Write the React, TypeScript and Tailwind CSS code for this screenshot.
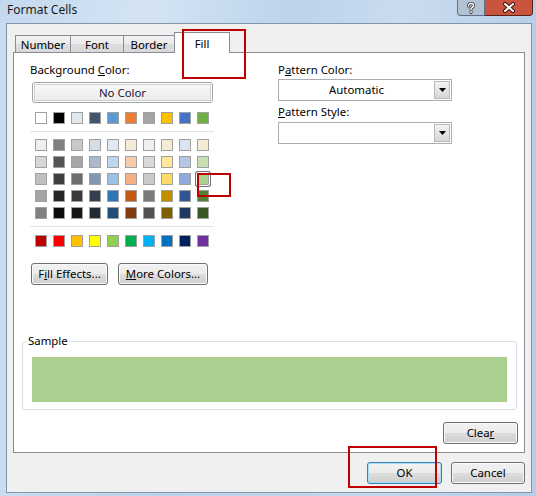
import React from 'react'

const baseRow = ['#ffffff', '#000000', '#dfe7ef', '#44546a', '#5b9bd5', '#ed7d31', '#a5a5a5', '#ffc000', '#4472c4', '#70ad47']

const themeRows = [
  ['#efefef', '#7f7f7f', '#c8c8c8', '#d6dce4', '#dfe8f3', '#f3ebd6', '#efefef', '#f3ebd6', '#d9e3f1', '#f3ebd6'],
  ['#d6d6d6', '#555555', '#a6a6a8', '#acb9ca', '#bdd7ee', '#f8cbad', '#dadada', '#ffe699', '#b4c6e7', '#c6e0b4'],
  ['#bfbfbf', '#3f3f3f', '#6e6e6e', '#8497b0', '#9bc2e6', '#f4b084', '#c9c9c9', '#ffd966', '#8ea9db', '#a9d08e'],
  ['#a5a5a5', '#262626', '#3a3a3a', '#333f4f', '#2e75b6', '#c55a11', '#7b7b7b', '#bf8f00', '#2f5597', '#538135'],
  ['#808080', '#0d0d0d', '#171717', '#222a35', '#1f4e79', '#843c0c', '#525252', '#7f6000', '#203864', '#385723'],
]

const standardRow = ['#c00000', '#ff0000', '#ffc000', '#ffff00', '#92d050', '#00b050', '#00b0f0', '#0070c0', '#002060', '#7030a0']

function Swatch({ color, selected = false }: { color: string; selected?: boolean }) {
  return (
    <div
      className={`w-[12px] h-[12px] border border-[#a0a0a0] ${
        selected ? 'shadow-[0_0_0_1px_#ffffff,0_0_0_2px_#6f6f6f] rounded-[1px]' : ''
      }`}
      style={{ backgroundColor: color }}
    />
  )
}

function SwatchRow({ colors, selectedIndex = -1 }: { colors: string[]; selectedIndex?: number }) {
  return (
    <div className="flex gap-[6px] ml-[5px]">
      {colors.map((c, i) => (
        <Swatch key={i} color={c} selected={i === selectedIndex} />
      ))}
    </div>
  )
}

function WinButton({
  children,
  className = '',
  primary = false,
}: {
  children: React.ReactNode
  className?: string
  primary?: boolean
}) {
  return (
    <button
      className={`h-[22px] flex items-center justify-center rounded-[3px] border text-[11.4px] text-black bg-[linear-gradient(#f2f2f2_0%,#ebebeb_50%,#dddddd_50%,#cfcfcf_100%)] ${
        primary
          ? 'border-[#3c7fb1] shadow-[inset_0_0_0_1px_#a8dcf6]'
          : 'border-[#707070] shadow-[inset_0_0_0_1px_#fafafa]'
      } ${className}`}
    >
      {children}
    </button>
  )
}

function Combo({ value = '' }: { value?: string }) {
  return (
    <div className="h-[22px] w-[174px] border border-[#abadb3] bg-white flex items-center pr-px">
      <span className="flex-1 text-center leading-[16px]">{value}</span>
      <div className="w-[16px] h-[18px] border border-[#b8b8b8] bg-[linear-gradient(#f3f3f3,#d6d6d6)] flex items-center justify-center">
        <svg width="7" height="4" viewBox="0 0 7 4">
          <polygon points="0,0 7,0 3.5,4" fill="#000" />
        </svg>
      </div>
    </div>
  )
}

const tabs = [
  { label: 'Number', w: 'w-[56px]' },
  { label: 'Font', w: 'w-[54px]' },
  { label: 'Border', w: 'w-[52px]' },
]

export default function App() {
  return (
    <div className="relative w-[536px] h-[496px] overflow-hidden bg-[linear-gradient(90deg,#c9dcf0,#bcd2ea_30%,#c3d7ed_70%,#b6cde7)] font-['Noto_Sans',sans-serif] text-[11.4px] text-black">
      {/* Title bar */}
      <div className="h-[23px] flex items-start bg-[linear-gradient(100deg,#c4d8ee_0%,#d4e4f4_28%,#bcd3eb_55%,#cadcef_75%,#b8cfe8_100%)]">
        <span className="ml-[7px] mt-[2px] leading-[16px] text-[12px] text-[#1a1a1a]">Format Cells</span>
        <div className="ml-auto mr-[3px] flex">
          <div className="w-[28px] h-[16px] rounded-bl-[4px] border border-t-0 border-[#5f6f84] bg-[#b3c2d2] flex items-center justify-center">
            <svg width="10" height="12" viewBox="0 0 10 12">
              <path
                d="M2.5 4 Q2.5 1.5 5 1.5 Q7.5 1.5 7.5 3.6 Q7.5 5 5.8 5.8 Q5 6.3 5 7.6 M5 9.3 L5 10.6"
                fill="none"
                stroke="#3b3b3b"
                strokeWidth="3"
                strokeLinecap="round"
              />
              <path
                d="M2.5 4 Q2.5 1.5 5 1.5 Q7.5 1.5 7.5 3.6 Q7.5 5 5.8 5.8 Q5 6.3 5 7.6 M5 9.3 L5 10.6"
                fill="none"
                stroke="#ffffff"
                strokeWidth="1.4"
                strokeLinecap="round"
              />
            </svg>
          </div>
          <div className="w-[48px] h-[16px] rounded-br-[4px] border border-t-0 border-l-0 border-[#5e1f17] bg-[#c9553f] flex items-center justify-center">
            <svg width="14" height="11" viewBox="0 0 14 11">
              <path d="M3 2 L11 9 M11 2 L3 9" stroke="#3a1410" strokeWidth="4" strokeLinecap="round" />
              <path d="M3 2 L11 9 M11 2 L3 9" stroke="#ffffff" strokeWidth="2" strokeLinecap="round" />
            </svg>
          </div>
        </div>
      </div>

      {/* Dialog body */}
      <div className="ml-[6px] w-[526px] h-[470px] border border-[#8295ab] bg-[#f0f0f0] px-[6px] flex flex-col">
        {/* Tabs */}
        <div className="flex items-end h-[28px] pl-[2px]">
          {tabs.map((t, i) => (
            <div
              key={t.label}
              className={`${t.w} h-[17px] ${i > 0 ? '-ml-px' : ''} border border-b-0 border-[#898c95] bg-[linear-gradient(#f3f3f3,#ebebeb_50%,#dddddd_50%,#d9d9d9)] flex items-center justify-center pt-[2px] leading-[14px]`}
            >
              {t.label}
            </div>
          ))}
          <div className="w-[56px] h-[21px] -ml-px -mb-px relative z-10 border border-b-0 border-[#898c95] bg-white flex items-start justify-center pt-[4px] leading-[14px]">
            Fill
          </div>
        </div>

        {/* Panel */}
        <div className="h-[401px] border border-[#898c95] bg-white flex flex-col">
          <div className="flex pt-[9px] pl-[16px]">
            {/* Left column */}
            <div className="w-[184px] flex flex-col">
              <div className="h-[16px] leading-[16px]">
                Background <span className="underline">C</span>olor:
              </div>
              <div className="mt-[4px] ml-[2px] w-[181px] h-[21px] rounded-[3px] border border-[#a3a3a3] bg-white p-px">
                <div className="h-full border border-[#cfcfcf] bg-[linear-gradient(#f8f8f8,#ececec)] flex items-center justify-center leading-[14px] text-[#14143a]">
                  No Color
                </div>
              </div>
              <div className="mt-[9px]">
                <SwatchRow colors={baseRow} />
              </div>
              <div className="mt-[7px] h-px bg-[#dde5ec]" />
              <div className="mt-[7px] flex flex-col gap-[5px]">
                {themeRows.map((r, i) => (
                  <SwatchRow key={i} colors={r} selectedIndex={i === 2 ? 9 : -1} />
                ))}
              </div>
              <div className="mt-[7px] h-px bg-[#dde5ec]" />
              <div className="mt-[8px]">
                <SwatchRow colors={standardRow} />
              </div>
              <div className="mt-[16px] flex">
                <WinButton className="ml-px w-[77px]">
                  F<span className="underline">i</span>ll Effects...
                </WinButton>
                <WinButton className="ml-[10px] w-[90px]">
                  <span className="underline">M</span>ore Colors...
                </WinButton>
              </div>
            </div>

            {/* Right column */}
            <div className="ml-[64px] w-[174px] flex flex-col">
              <div className="h-[16px] leading-[16px]">
                P<span className="underline">a</span>ttern Color:
              </div>
              <div className="mt-px">
                <Combo value="Automatic" />
              </div>
              <div className="mt-[3px] h-[16px] leading-[16px]">
                <span className="underline">P</span>attern Style:
              </div>
              <div className="mt-[2px]">
                <Combo />
              </div>
            </div>
          </div>

          {/* Sample */}
          <fieldset className="mt-[49px] ml-[8px] mr-[7px] border border-[#d5dfe5] rounded-[3px] px-[9px] pb-[7px]">
            <legend className="-ml-[5px] px-[1px] leading-[14px]">Sample</legend>
            <div className="mt-[9px] h-[45px] bg-[#abcf8e]" />
          </fieldset>

          <div className="mt-[12px] mr-[6px] flex justify-end">
            <WinButton className="w-[75px]">
              Clea<span className="underline">r</span>
            </WinButton>
          </div>
        </div>

        {/* Footer */}
        <div className="mt-[9px] flex justify-end gap-[9px]">
          <WinButton primary className="w-[75px]">
            OK
          </WinButton>
          <WinButton className="w-[74px]">Cancel</WinButton>
        </div>
      </div>

      {/* Annotation boxes */}
      <div className="absolute left-[182px] top-[29px] w-[64px] h-[50px] border-2 border-[#c00000] z-20" />
      <div className="absolute left-[197px] top-[173px] w-[34px] h-[24px] border-2 border-[#c00000] z-20" />
      <div className="absolute left-[348px] top-[446px] w-[89px] h-[42px] border-2 border-[#c00000] z-20" />
    </div>
  )
}
